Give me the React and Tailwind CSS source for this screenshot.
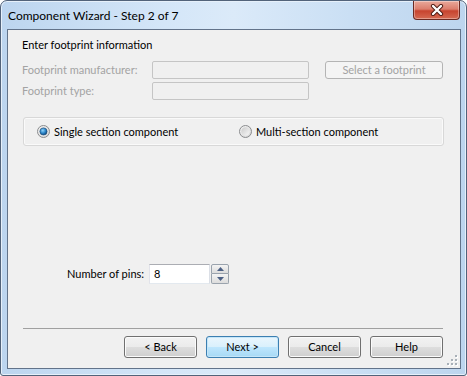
import React from "react";

const font = { fontFamily: 'Lato, "Noto Sans", sans-serif' };

function Radio({ checked }) {
  return (
    <svg width="13" height="13" viewBox="0 0 13 13" className="shrink-0">
      <defs>
        <linearGradient id="rOut" x1="0" y1="0" x2="1" y2="1">
          <stop offset="0" stopColor="#f6f6f6" />
          <stop offset="1" stopColor="#d4d4d4" />
        </linearGradient>
        <linearGradient id="rIn" x1="0" y1="0" x2="1" y2="1">
          <stop offset="0" stopColor="#cbcbcb" />
          <stop offset="1" stopColor="#f8f8f8" />
        </linearGradient>
        <radialGradient id="rDot" cx="0.4" cy="0.35" r="0.7">
          <stop offset="0" stopColor="#8fd4fb" />
          <stop offset="0.55" stopColor="#2a84c8" />
          <stop offset="1" stopColor="#0b3d70" />
        </radialGradient>
      </defs>
      <circle cx="6.5" cy="6.5" r="6" fill="url(#rOut)" stroke="#8a8c8e" strokeWidth="1" />
      <circle cx="6.5" cy="6.5" r="4.2" fill="url(#rIn)" />
      {checked && <circle cx="6.5" cy="6.5" r="3.6" fill="url(#rDot)" stroke="#1b4b78" strokeWidth="0.6" />}
    </svg>
  );
}

function Btn({ children, def }) {
  return (
    <div
      className={
        "w-[73px] h-[22px] rounded-[3px] border flex items-center justify-center text-[11px] text-black whitespace-nowrap " +
        (def
          ? "border-[#3c7fb1] bg-[linear-gradient(to_bottom,#eaf6fd_0%,#d9f0fc_50%,#bee6fd_51%,#a7d9f5_100%)] shadow-[inset_0_0_0_1px_#c5e6f9]"
          : "border-[#707070] bg-[linear-gradient(to_bottom,#f2f2f2_0%,#ebebeb_50%,#dddddd_51%,#cfcfcf_100%)] shadow-[inset_0_0_0_1px_#fbfbfb]")
      }
    >
      {children}
    </div>
  );
}

export default function App() {
  return (
    <div style={font} className="w-[467px] h-[376px] bg-white">
      <div className="w-[467px] h-[376px] rounded-t-[7px] rounded-b-[3px] border border-[#52637a] flex flex-col bg-[linear-gradient(to_right,#bcd5ef_0%,#d4e6f8_35%,#dbeaf9_50%,#cadff4_75%,#bdd5ee_100%)] shadow-[inset_0_0_0_1px_#e6f0fa]">
        {/* Title bar */}
        <div className="h-[28px] flex items-start justify-between">
          <div className="pl-[7px] pt-[6px] text-[12px] leading-[17px] text-black whitespace-nowrap">Component Wizard - Step 2 of 7</div>
          <div className="mr-[6px] w-[47px] h-[19px] rounded-b-[4px] border border-t-0 border-[#6b2a22] bg-[linear-gradient(to_bottom,#e9a99b_0%,#dc7e6d_45%,#c7442f_55%,#d56a52_100%)] shadow-[inset_0_0_0_1px_rgba(255,255,255,0.35)] flex items-center justify-center">
            <svg width="14" height="12" viewBox="0 0 14 12">
              <path d="M3 2 L11 10 M11 2 L3 10" stroke="#4b1a12" strokeWidth="4.2" strokeLinecap="round" />
              <path d="M3 2 L11 10 M11 2 L3 10" stroke="#ffffff" strokeWidth="2.4" strokeLinecap="round" />
            </svg>
          </div>
        </div>
        {/* Client */}
        <div className="relative ml-[6px] mr-[5px] mb-[6px] flex-1 border border-[#62738a] bg-[#f0f0f0] flex flex-col text-[11px] leading-[16px] whitespace-nowrap">
          <div className="pl-[14px] pt-[7px] text-black">Enter footprint information</div>
          <div className="pl-[14px] mt-[8px] flex items-center h-[18px]">
            <div className="w-[130px] text-[#a3a3a3]">Footprint manufacturer:</div>
            <div className="w-[157px] h-[18px] rounded-[2px] border border-[#c5c5c5] bg-[#f0f0f0]" />
            <div className="ml-[16px] w-[118px] h-[18px] rounded-[3px] border border-[#b4b4b4] bg-[#f4f4f4] flex items-center justify-center text-[#a3a3a3]">
              Select a footprint
            </div>
          </div>
          <div className="pl-[14px] mt-[3px] flex items-center h-[18px]">
            <div className="w-[130px] text-[#a3a3a3]">Footprint type:</div>
            <div className="w-[157px] h-[18px] rounded-[2px] border border-[#c5c5c5] bg-[#f0f0f0]" />
          </div>
          <div className="ml-[15px] mt-[17px] w-[421px] h-[29px] rounded-[3px] border border-[#d8d8d8] shadow-[inset_0_0_0_1px_#fafafa] flex items-center">
            <div className="ml-[13px] flex items-center gap-[4px] w-[202px]">
              <Radio checked />
              <span className="text-black">Single section component</span>
            </div>
            <div className="flex items-center gap-[4px]">
              <Radio />
              <span className="text-black">Multi-section component</span>
            </div>
          </div>
          <div className="mt-[118px] pl-[59px] flex items-center h-[20px]">
            <div className="w-[82px] text-black">Number of pins:</div>
            <div className="w-[61px] h-[20px] border border-[#abadb3] border-l-[#e2e3ea] border-r-[#dbdfe6] border-b-[#e3e9ef] bg-white flex items-center pl-[4px] text-black">
              8
            </div>
            <div className="ml-[1px] w-[18px] h-[20px] flex flex-col">
              <div className="h-[10px] rounded-t-[2px] border border-[#9aa3ad] bg-[linear-gradient(to_bottom,#f4f4f4,#dcdcdc)] flex items-center justify-center">
                <svg width="7" height="4" viewBox="0 0 7 4">
                  <path d="M0 4 L3.5 0 L7 4 Z" fill="#4d6185" />
                </svg>
              </div>
              <div className="h-[10px] rounded-b-[2px] border border-t-0 border-[#9aa3ad] bg-[linear-gradient(to_bottom,#f4f4f4,#dcdcdc)] flex items-center justify-center">
                <svg width="7" height="4" viewBox="0 0 7 4">
                  <path d="M0 0 L3.5 4 L7 0 Z" fill="#4d6185" />
                </svg>
              </div>
            </div>
          </div>
          <div className="mt-[44px] ml-[15px] mr-[17px] h-[1px] bg-[#a0a0a0]" />
          <div className="mt-[7px] pr-[17px] flex justify-end gap-[9px]">
            <Btn>&lt; Back</Btn>
            <Btn def>Next &gt;</Btn>
            <Btn>Cancel</Btn>
            <Btn>Help</Btn>
          </div>
          {/* size grip */}
          <div className="absolute right-[2px] bottom-[2px] w-[11px] h-[11px]">
            <svg width="11" height="11" viewBox="0 0 11 11">
              {[
                [8, 0],
                [4, 4],
                [8, 4],
                [0, 8],
                [4, 8],
                [8, 8],
              ].map(([x, y], i) => (
                <g key={i}>
                  <rect x={x + 1} y={y + 1} width="2" height="2" fill="#ffffff" />
                  <rect x={x} y={y} width="2" height="2" fill="#a8b0b8" />
                </g>
              ))}
            </svg>
          </div>
        </div>
      </div>
    </div>
  );
}
